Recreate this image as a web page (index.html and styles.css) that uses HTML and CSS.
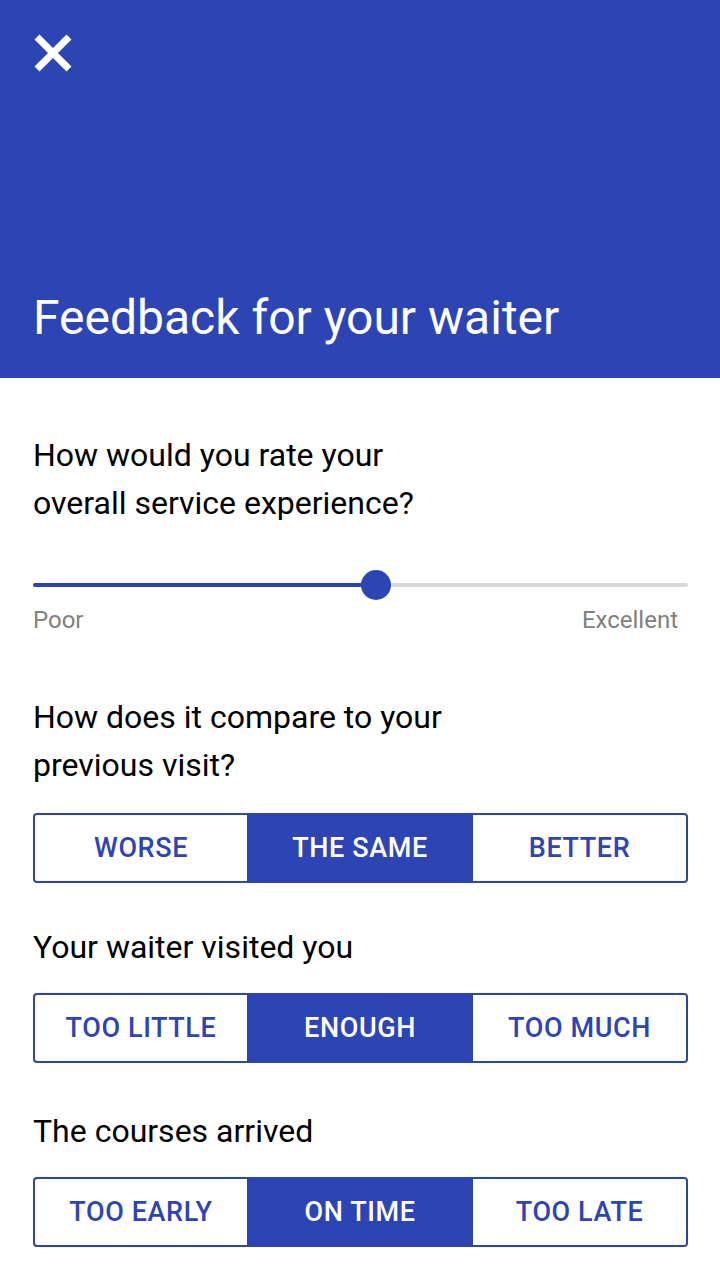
FILE: index.html
```html
<!DOCTYPE html>
<html>
<head>
<meta charset="utf-8">
<link rel="stylesheet" href="styles.css">
</head>
<body>
<div class="page">
  <header class="header">
    <button class="close" aria-label="Close">
      <svg width="40" height="40" viewBox="0 0 40 40"><path d="M4 4 L36 36 M36 4 L4 36" stroke="#fff" stroke-width="7" stroke-linecap="butt"/></svg>
    </button>
    <h1 class="title">Feedback for your waiter</h1>
  </header>
  <main class="content">
    <p class="question q1">How would you rate your<br>overall service experience?</p>
    <div class="slider">
      <div class="track">
        <div class="fill" style="width: 52.4%"></div>
        <div class="thumb" style="left: 52.4%"></div>
      </div>
      <div class="labels"><span>Poor</span><span>Excellent</span></div>
    </div>
    <p class="question q2">How does it compare to your<br>previous visit?</p>
    <div class="segmented">
      <span class="seg">WORSE</span>
      <span class="seg active">THE SAME</span>
      <span class="seg">BETTER</span>
    </div>
    <p class="question q3">Your waiter visited you</p>
    <div class="segmented">
      <span class="seg">TOO LITTLE</span>
      <span class="seg active">ENOUGH</span>
      <span class="seg">TOO MUCH</span>
    </div>
    <p class="question q4">The courses arrived</p>
    <div class="segmented">
      <span class="seg">TOO EARLY</span>
      <span class="seg active">ON TIME</span>
      <span class="seg">TOO LATE</span>
    </div>
  </main>
</div>
</body>
</html>
```
FILE: styles.css
```css
* { box-sizing: border-box; }
html, body { margin: 0; padding: 0; background: #fff; }
body { font-family: Roboto, "Liberation Sans", sans-serif; width: 720px; height: 1280px; overflow: hidden; }
.header {
  background: #2d45b4;
  height: 378px;
  padding: 33px 33px 0 33px;
  display: flex;
  flex-direction: column;
}
.close {
  width: 40px; height: 40px; padding: 0; border: 0; background: none;
  display: block;
}
.close svg { display: block; }
.title {
  margin: auto 0 0 0;
  padding-bottom: 32px;
  font-weight: 400;
  font-size: 48px;
  line-height: 56px;
  color: #fff;
}
.content { padding: 0 32px 0 33px; }
.question {
  margin: 0;
  font-size: 32px;
  line-height: 48px;
  color: #000;
}
.q1 { margin-top: 53px; }
.slider { margin-top: 56px; }
.track {
  position: relative;
  height: 4px;
  background: #d9d9d9;
  border-radius: 2px;
}
.fill { height: 4px; background: #2d45b4; border-radius: 2px; }
.thumb {
  position: absolute;
  top: 50%;
  width: 30px; height: 30px;
  margin: -15px 0 0 -15px;
  border-radius: 50%;
  background: #2d45b4;
}
.labels {
  display: flex;
  justify-content: space-between;
  padding-right: 10px;
  margin-top: 19px;
  font-size: 24px;
  line-height: 28px;
  color: #808080;
}
.q2 { margin-top: 59px; }
.q3 { margin-top: 40px; }
.q4 { margin-top: 44px; }
.segmented {
  margin-top: 24px;
  height: 70px;
  border: 2px solid #2d45b4;
  border-radius: 4px;
  display: grid;
  grid-template-columns: 212fr 226fr 213fr;
}
.q3 + .segmented, .q4 + .segmented { margin-top: 22px; }
.seg {
  display: flex; align-items: center; justify-content: center;
  font-size: 27px;
  font-weight: 500;
  letter-spacing: 0.6px;
  color: #2d45b4;
}
.seg.active { background: #2d45b4; color: #fff; }
```
